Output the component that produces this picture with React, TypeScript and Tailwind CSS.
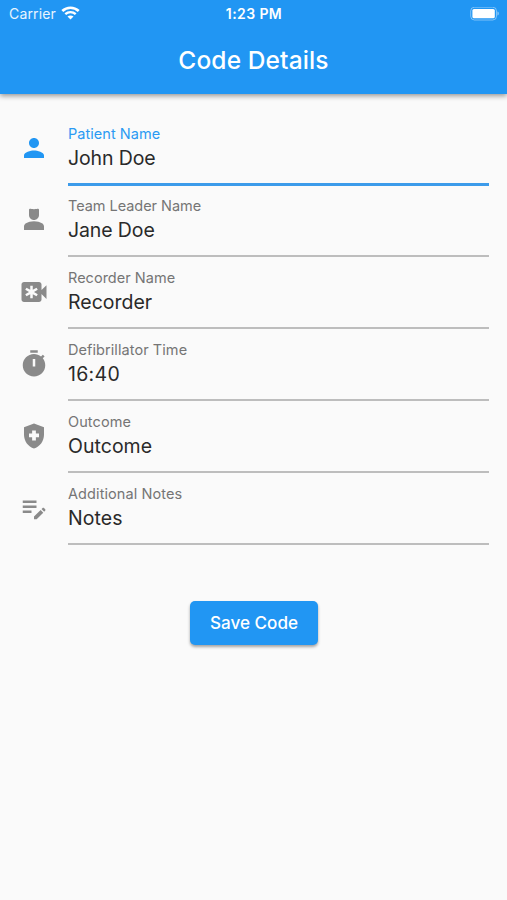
import React from "react";

type Field = { label: string; value: string; icon: string; active?: boolean; labelTracking: string; valueTracking: string };

const fields: Field[] = [
  {
    label: "Patient Name",
    value: "John Doe",
    active: true,
    labelTracking: "tracking-[0.04px]",
    valueTracking: "tracking-[-0.12px]",
    icon: "M12 12c2.21 0 4-1.79 4-4s-1.79-4-4-4-4 1.79-4 4 1.79 4 4 4zm0 2c-2.67 0-8 1.34-8 4v2h16v-2c0-2.66-5.33-4-8-4z",
  },
  {
    label: "Team Leader Name",
    value: "Jane Doe",
    labelTracking: "tracking-[-0.04px]",
    valueTracking: "tracking-[-0.12px]",
    icon: "M18.39 14.56C16.71 13.7 14.53 13 12 13s-4.71.7-6.39 1.56C4.61 15.07 4 16.1 4 17.22V20h16v-2.78c0-1.12-.61-2.15-1.61-2.66zM12 12c2.21 0 4-1.79 4-4V3.8c0-.5-.3-.8-.8-.8-.9 0-1.4.35-3.2.35S9.7 3 8.8 3c-.5 0-.8.3-.8.8V8c0 2.21 1.79 4 4 4z",
  },
  {
    label: "Recorder Name",
    value: "Recorder",
    labelTracking: "tracking-[0.02px]",
    valueTracking: "tracking-[0px]",
    icon: "M18 10.48V6c0-1.1-.9-2-2-2H4c-1.1 0-2 .9-2 2v12c0 1.1.9 2 2 2h12c1.1 0 2-.9 2-2v-4.48l4 3.98v-11l-4 3.98zM14 15.46l-3-1.73V17H9v-3.27l-3 1.73-1-1.73L8 12l-3-1.73 1-1.73 3 1.73V7h2v3.27l3-1.73 1 1.73L12 12l3 1.73-1 1.73z",
  },
  {
    label: "Defibrillator Time",
    value: "16:40",
    labelTracking: "tracking-[0.07px]",
    valueTracking: "tracking-[0.3px]",
    icon: "M9 1h6v2H9zM19.03 7.39l1.42-1.42c-.43-.51-.9-.99-1.41-1.41l-1.42 1.42C16.07 4.74 14.12 4 12 4c-4.97 0-9 4.03-9 9s4.02 9 9 9 9-4.03 9-9c0-2.12-.74-4.07-1.97-5.61zM13 14h-2V8h2v6z",
  },
  {
    label: "Outcome",
    value: "Outcome",
    labelTracking: "tracking-[0.1px]",
    valueTracking: "tracking-[0.03px]",
    icon: "M10.5 13H8v-3h2.5V7.5h3V10H16v3h-2.5v2.5h-3V13zM12 2L4 5v6.09c0 5.05 3.41 9.76 8 10.91 4.59-1.15 8-5.86 8-10.91V5l-8-3z",
  },
  {
    label: "Additional Notes",
    value: "Notes",
    labelTracking: "tracking-[0.09px]",
    valueTracking: "tracking-[0.1px]",
    icon: "M3 10h11v2H3v-2zm0-2h11V6H3v2zm0 8h7v-2H3v2zm15.01-3.13.71-.71c.39-.39 1.02-.39 1.41 0l.71.71c.39.39.39 1.02 0 1.41l-.71.71-2.12-2.12zm-.71.71-5.3 5.3V21h2.12l5.3-5.3-2.12-2.12z",
  },
];

function StatusBar() {
  return (
    <div className="grid h-[27px] grid-cols-3 items-center pl-[9px] pr-[8px] text-[14px] leading-[27px]">
      <div className="flex items-center gap-[5px]">
        <span className="tracking-[0.15px] text-white/90">Carrier</span>
        <svg className="mt-[-1px] h-[14px] w-[19px]" viewBox="0 0 19 14" fill="none" stroke="white">
          <path d="M1.3 5.1C6 .6 13 .6 17.7 5.1" strokeWidth="2.7" />
          <path d="M4.3 8.2c3-2.8 7.4-2.8 10.4 0" strokeWidth="2.4" />
          <path d="M9.5 13.6 6.5 10.6c1.8-1.4 4.2-1.4 6 0z" fill="white" stroke="none" />
        </svg>
      </div>
      <span className="text-center font-semibold tracking-[0.4px]">1:23 PM</span>
      <svg className="h-[14px] w-[29px] justify-self-end" viewBox="0 0 29 14">
        <rect x=".7" y=".2" width="25.8" height="12.8" rx="3.8" fill="none" stroke="white" strokeOpacity=".42" />
        <rect x="2.4" y="1.9" width="22.4" height="9.4" rx="1.6" fill="white" />
        <path d="M27.4 4.6c2 .6 2 3.4 0 4z" fill="white" fillOpacity=".45" />
      </svg>
    </div>
  );
}

function FieldRow({ field }: { field: Field }) {
  return (
    <label className="flex h-[72px] items-start">
      <span className="flex w-[49px] shrink-0 pt-[20px]">
        <svg className={`h-[30px] w-[30px] ${field.active ? "text-[#2196f3]" : "text-[#8a8a8a]"}`} viewBox="0 0 24 24" fill="currentColor">
          <path fillRule="evenodd" d={field.icon} />
        </svg>
      </span>
      <span
        className={`flex grow flex-col pt-[12px] ${field.active ? "h-[73px] border-b-3 border-[#3c9bea]" : "h-[72px] border-b-2 border-[#bdbdbd]"}`}
      >
        <span className={`text-[14.5px] leading-[18px] ${field.labelTracking} ${field.active ? "text-[#2b9af3]" : "text-[#757575]"}`}>{field.label}</span>
        <span className={`text-[19.5px] leading-[30px] text-[#2a2a2a] ${field.valueTracking}`}>{field.value}</span>
      </span>
    </label>
  );
}

export default function App() {
  return (
    <div className="flex h-[900px] w-full flex-col bg-[#fafafa] font-['Inter',sans-serif]">
      <header className="h-[94px] bg-[#2196f3] text-white shadow-[0_2px_5px_rgba(0,0,0,0.4)]">
        <StatusBar />
        <h1 className="text-center text-[24.5px] font-medium leading-[66px] tracking-[0.12px]">Code Details</h1>
      </header>
      <main className="flex flex-col pl-[19px] pr-[18px] pt-[19px]">
        {fields.map((field) => (
          <FieldRow key={field.label} field={field} />
        ))}
        <button className="mt-[56px] h-[44px] w-[128px] self-center rounded-[5px] bg-[#2196f3] text-[17.1px] font-medium text-white shadow-[0_2px_3px_rgba(0,0,0,0.35)]">
          Save Code
        </button>
      </main>
    </div>
  );
}
